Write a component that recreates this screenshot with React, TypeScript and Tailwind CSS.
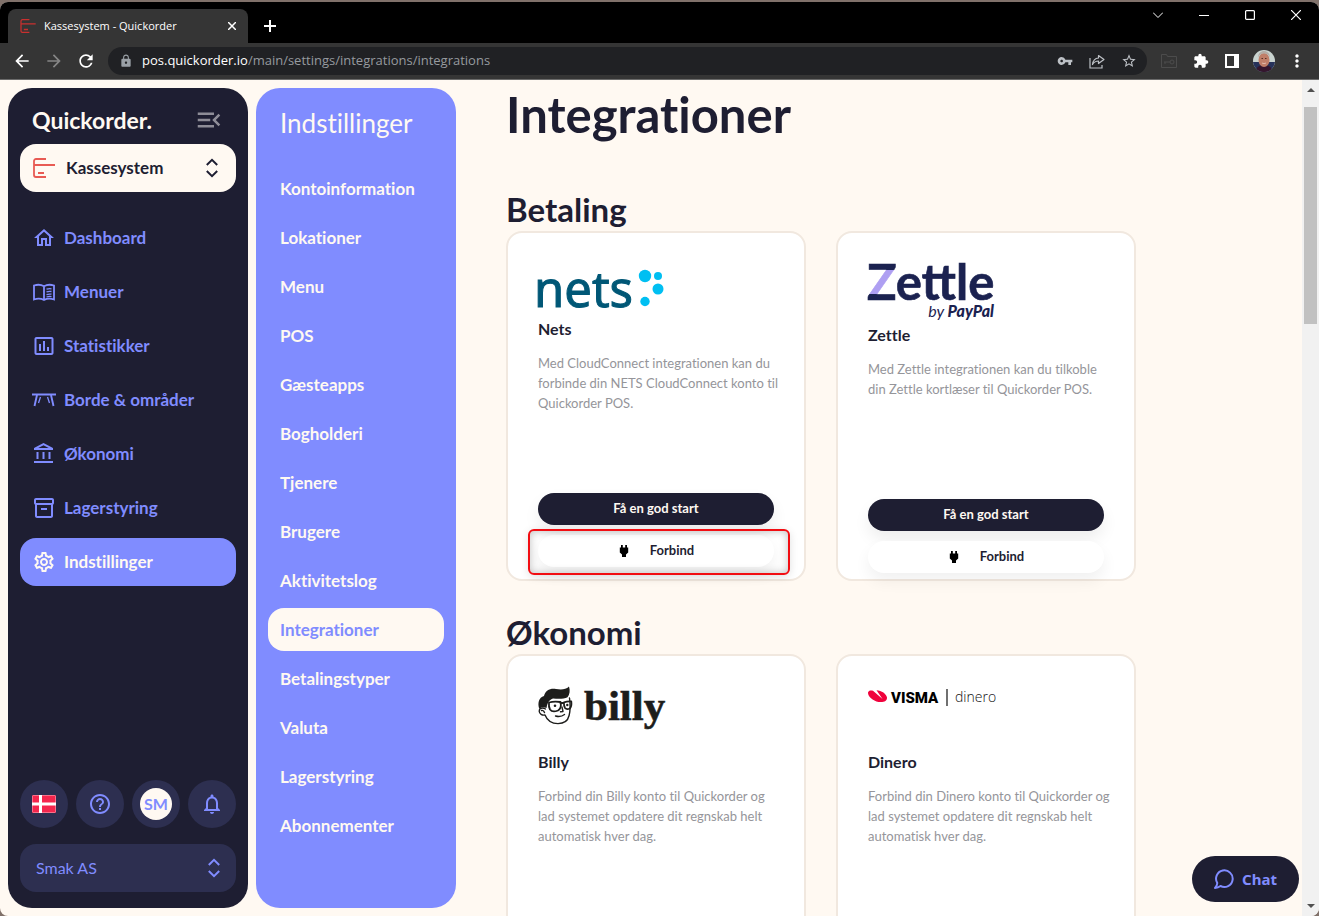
import React from 'react';
import clsx from 'clsx';
import {
  MdArrowBack,
  MdArrowForward,
  MdExtension,
  MdHelpOutline,
  MdInsertChartOutlined,
  MdLock,
  MdMenuOpen,
  MdMoreVert,
  MdNotificationsNone,
  MdOutlineAccountBalance,
  MdOutlineHome,
  MdOutlineInventory2,
  MdOutlineSettings,
  MdRefresh,
  MdStarBorder,
  MdVpnKey,
} from 'react-icons/md';

interface NavItem {
  label: string;
  icon: React.ReactNode;
}

interface Integration {
  name: string;
  description: string;
  logo: React.ReactNode;
  highlighted?: boolean;
}

interface Section {
  title: string;
  items: Integration[];
}

function BrandMark({ className }: { className?: string }) {
  return (
    <svg viewBox="0 0 22 20" className={className} fill="none" stroke="currentColor" strokeWidth="1.8" aria-hidden="true">
      <path d="M13 1H3a2 2 0 0 0-2 2v14a2 2 0 0 0 2 2h10M1 7h21M5 15h6" />
    </svg>
  );
}

function BookIcon() {
  return (
    <svg viewBox="0 0 24 24" className="size-6" fill="none" stroke="currentColor" aria-hidden="true">
      <path d="M12 6.200C9 4.500 5 4.500 2 5.500v14c3-1 7-1 10 .5 3-1.500 7-1.500 10-.5v-14c-3-1-7-1-10 .7zM12 6v14" strokeWidth="1.800" />
      <path d="M14.500 9.200q2.500-.8 5-.4M14.500 11.900q2.500-.8 5-.4M14.500 14.600q2.500-.8 5-.4M14.500 17q2.500-.8 5-.4" strokeWidth="1.300" />
    </svg>
  );
}

function TableIcon() {
  return (
    <svg viewBox="0 0 24 24" className="size-6" fill="none" stroke="currentColor" aria-hidden="true">
      <path d="M0 6.500h24" strokeWidth="2" />
      <path d="M5 7 2.500 18M19 7l2.500 11" strokeWidth="1.9" />
      <path d="M8.500 9 6.500 15M15.500 9l2 6" strokeWidth="1.300" />
    </svg>
  );
}

function UpDownIcon({ className }: { className?: string }) {
  return (
    <svg viewBox="0 0 12 20" className={className} fill="none" stroke="currentColor" strokeWidth="2" aria-hidden="true">
      <path d="M.8 7 6 1.800 11.200 7M.8 13 6 18.200l5.200-5.200" />
    </svg>
  );
}

function PlugIcon() {
  return (
    <svg viewBox="0 0 12 12" className="size-3" fill="#000" aria-hidden="true">
      <path d="M3 0h1.800v2.500h2.400V0H9v2.500h1.200v5L8 9.500V12H4V9.500L1.800 7.500v-5H3z" />
    </svg>
  );
}

function ShareIcon() {
  return (
    <svg viewBox="0 0 16 16" className="size-4" fill="none" stroke="currentColor" strokeWidth="1.2" aria-hidden="true">
      <path d="M1 5v10h12v-3" />
      <path d="M9.500 2.500 15 6.500l-5.500 4V8C7 8 5 9 3.500 11.500 4 7.500 6 5.200 9.500 5z" strokeLinejoin="round" />
    </svg>
  );
}

function ChatIcon() {
  return (
    <svg viewBox="0 0 20 20" className="size-5" fill="none" stroke="currentColor" strokeWidth="2" strokeLinejoin="round" aria-hidden="true">
      <path d="M3.300 14A8.300 8.300 0 1 1 6.500 17C5 18.200 3.200 18.900 1 18.900 2.500 17.500 3.200 16 3.300 14z" />
    </svg>
  );
}

function DanishFlag() {
  return (
    <svg viewBox="0 0 24 18" className="h-[18px] w-6" role="img" aria-label="Dansk">
      <rect width="24" height="18" rx="1" fill="#f4264d" />
      <path d="M8.500 0v18M0 9h24" stroke="#fff" strokeWidth="3" />
      <rect x=".5" y=".5" width="23" height="17" rx="1" fill="none" stroke="#fff" strokeOpacity=".35" />
    </svg>
  );
}

function NetsLogo() {
  return (
    <svg viewBox="0 0 126 50" className="h-[50px] w-[126px] overflow-visible">
      <text x="-4" y="44" fontFamily="'Noto Sans', sans-serif" fontSize="49" fill="#005776" stroke="#005776" strokeWidth="1">nets</text>
      <g fill="#00bff2">
        <circle cx="107" cy="13" r="6.200" />
        <circle cx="120" cy="13" r="4" />
        <circle cx="120" cy="26" r="5.500" />
        <circle cx="107" cy="38.500" r="4.700" />
      </g>
    </svg>
  );
}

function ZettleLogo() {
  return (
    <svg viewBox="0 0 126 56" className="h-14 w-[126px] overflow-visible [font-variant-ligatures:normal]">
      <defs>
        <linearGradient id="zettle-z" gradientUnits="userSpaceOnUse" x1="0" y1="0" x2="0" y2="37">
          <stop offset=".19" stopColor="#1b2250" />
          <stop offset=".19" stopColor="#ae9ff2" />
          <stop offset=".84" stopColor="#ae9ff2" />
          <stop offset=".84" stopColor="#1b2250" />
        </linearGradient>
      </defs>
      <text x="-1" y="37" fontFamily="Lato, sans-serif" fontWeight="700" fontSize="49" fill="#1b2250" stroke="#1b2250" strokeWidth=".6">
        <tspan fill="url(#zettle-z)" stroke="url(#zettle-z)">Z</tspan>ettle
      </text>
      <text x="126" y="54" textAnchor="end" fontFamily="Lato, sans-serif" fontStyle="italic" fontSize="16" fill="#1b2250">
        by <tspan fontWeight="900">PayPal</tspan>
      </text>
    </svg>
  );
}

function BillyLogo() {
  return (
    <svg viewBox="0 0 126 60" className="h-[60px] w-[126px] overflow-visible">
      <g fill="none" stroke="#1d1d1b" strokeWidth="1.400" strokeLinecap="round" strokeLinejoin="round">
        <path d="M31.500 12c.8 6 1 12-.4 17.500C29.800 35 25.500 37.600 20 37.600c-6.500 0-11-3.600-13-8.600-3 .5-5.500-1-5.800-3.800C1 22.500 4 21 7.500 23" fill="#fff" />
        <path d="M3.500 24.500c1.500-.4 2.500.5 3 2" />
        <path d="M11 16.500c3.500-1 7.500-1 11.500-.5.800 3.500 0 7-2.500 8.500-3 1.200-6.500 1-8-1-1-2-1.300-4.500-1-7z" strokeWidth="1.800" />
        <path d="M26 16.300c2.500-.8 5-1 7.300-.8.300 2.500 0 5.500-1.500 7-2 .9-3.800.7-4.800-.5-.9-1.500-1.200-3.500-1-5.700zM22.500 17l3.500-.2" strokeWidth="1.800" />
        <path d="M24 21l1 4.500-2.500.3M17.500 30c3.500 1 6.500.5 9-1.500" />
      </g>
      <path d="M1.300 23C-.6 17 .8 11.500 6 10 7.500 4.500 12 2 18 3c5 .8 9.500.8 13-2.500 1.300 4 .8 8-1.500 10.700-3.500 1.800-8.500 2-14.500 1.300-3.500 1.300-5.500 3.500-6.500 9.500-3-1.500-5.500-1-7.200 1z" fill="#1d1d1b" />
      <circle cx="17" cy="19.800" r="1.300" fill="#1d1d1b" />
      <circle cx="29.300" cy="19" r="1.200" fill="#1d1d1b" />
      <text x="46" y="34" fontFamily="'Liberation Serif', serif" fontWeight="700" fontSize="43" fill="#1d1d1b" stroke="#1d1d1b" strokeWidth=".6">billy</text>
    </svg>
  );
}

function DineroLogo() {
  return (
    <svg viewBox="0 0 126 60" className="h-[60px] w-[126px] overflow-visible">
      <path d="M0 6.500C.5 4.300 3 4 5 4.800L14.500 13 8.500 4.300C13.500 4.500 18.500 8 19 11.500c.3 3.500-3.500 5.200-8.500 4.400C5 15-.3 10.500 0 6.500z" fill="#f0023c" />
      <text x="23" y="17" fontFamily="Roboto, sans-serif" fontWeight="900" fontSize="15" fill="#000">VISMA</text>
      <path d="M79 3v17" stroke="#111" strokeWidth="1.200" />
      <text x="87" y="16" fontFamily="'Open Sans', sans-serif" fontWeight="300" fontSize="14" fill="#111">dinero</text>
    </svg>
  );
}

const navItems: NavItem[] = [
  { label: 'Dashboard', icon: <MdOutlineHome className="size-6" /> },
  { label: 'Menuer', icon: <BookIcon /> },
  { label: 'Statistikker', icon: <MdInsertChartOutlined className="size-6" /> },
  { label: 'Borde & områder', icon: <TableIcon /> },
  { label: 'Økonomi', icon: <MdOutlineAccountBalance className="size-6" /> },
  { label: 'Lagerstyring', icon: <MdOutlineInventory2 className="size-6" /> },
  { label: 'Indstillinger', icon: <MdOutlineSettings className="size-6" /> },
];

const settingsItems = [
  'Kontoinformation',
  'Lokationer',
  'Menu',
  'POS',
  'Gæsteapps',
  'Bogholderi',
  'Tjenere',
  'Brugere',
  'Aktivitetslog',
  'Integrationer',
  'Betalingstyper',
  'Valuta',
  'Lagerstyring',
  'Abonnementer',
];

// Line breaks in the descriptions are kept as written
const sections: Section[] = [
  {
    title: 'Betaling',
    items: [
      {
        name: 'Nets',
        description: 'Med CloudConnect integrationen kan du\nforbinde din NETS CloudConnect konto til\nQuickorder POS.',
        logo: <NetsLogo />,
        highlighted: true,
      },
      {
        name: 'Zettle',
        description: 'Med Zettle integrationen kan du tilkoble\ndin Zettle kortlæser til Quickorder POS.',
        logo: <ZettleLogo />,
      },
    ],
  },
  {
    title: 'Økonomi',
    items: [
      {
        name: 'Billy',
        description: 'Forbind din Billy konto til Quickorder og\nlad systemet opdatere dit regnskab helt\nautomatisk hver dag.',
        logo: <BillyLogo />,
      },
      {
        name: 'Dinero',
        description: 'Forbind din Dinero konto til Quickorder og\nlad systemet opdatere dit regnskab helt\nautomatisk hver dag.',
        logo: <DineroLogo />,
      },
    ],
  },
];

function BrowserBar() {
  return (
    <header className="shrink-0 bg-black font-['Open_Sans',sans-serif] text-white">
      <div className="flex h-[41px] items-end justify-between pl-2">
        <div className="flex h-[34px] items-center">
          <div className="flex h-full w-60 items-center rounded-t-lg bg-[#353535] pr-2.5 pl-3 text-[11px]">
            <BrandMark className="h-3.5 w-4 text-[#c9302f]" />
            <span className="ml-2 flex-1 whitespace-nowrap">Kassesystem - Quickorder</span>
            <button aria-label="Luk fane" className="p-0.5">
              <svg viewBox="0 0 8 8" className="size-2" stroke="#fff" strokeWidth="1.500"><path d="M0 0l8 8M8 0L0 8" /></svg>
            </button>
          </div>
          <button aria-label="Ny fane" className="ml-4">
            <svg viewBox="0 0 12 12" className="size-3" stroke="#fff" strokeWidth="2"><path d="M6 0v12M0 6h12" /></svg>
          </button>
        </div>
        <div className="flex h-full items-start gap-9 pt-2 pr-[18px]">
          <button aria-label="Søg i faner">
            <svg viewBox="0 0 10 10" className="size-2.5" fill="none" stroke="#fff"><path d="M0 2.500l5 5 5-5" /></svg>
          </button>
          <button aria-label="Minimer">
            <svg viewBox="0 0 10 10" className="size-2.5" stroke="#fff"><path d="M0 5.500h10" /></svg>
          </button>
          <button aria-label="Maksimer">
            <svg viewBox="0 0 10 10" className="size-2.5" fill="none" stroke="#fff" strokeWidth="1.200"><rect x=".6" y=".6" width="8.800" height="8.800" rx="1" /></svg>
          </button>
          <button aria-label="Luk">
            <svg viewBox="0 0 10 10" className="size-2.5" stroke="#fff" strokeWidth="1.200"><path d="M0 0l10 10M10 0L0 10" /></svg>
          </button>
        </div>
      </div>
      <div className="flex h-[37px] items-center border-b border-[#6b6b6b] bg-[#353535] pr-3.5">
        <div className="flex items-center gap-3 pl-3">
          <button aria-label="Tilbage"><MdArrowBack className="size-5" /></button>
          <button aria-label="Frem" className="text-[#858585]"><MdArrowForward className="size-5" /></button>
          <button aria-label="Genindlæs"><MdRefresh className="size-5" /></button>
        </div>
        <div className="ml-3 flex h-7 flex-1 items-center rounded-full bg-[#202124] pr-2.5 pl-[11px] text-[#bdc1c6]">
          <MdLock className="size-3.5 text-[#9aa0a6]" />
          <div className="ml-[9px] flex-1 text-[13px] text-[#969a9f]">
            <span className="text-white">pos.quickorder.io</span>/main/settings/integrations/integrations
          </div>
          <div className="flex items-center gap-4">
            <MdVpnKey className="size-4" />
            <ShareIcon />
            <MdStarBorder className="size-4" />
          </div>
        </div>
        <div className="ml-3.5 flex items-center gap-4">
          <svg viewBox="0 0 16 14" className="h-3.5 w-4" fill="none" stroke="#4c4c4c" aria-hidden="true">
            <path d="M.5.500h5l1 2h9v11H.5z" />
            <path d="M3 8h6M4 8v2" />
            <circle cx="11" cy="8" r="2" />
          </svg>
          <MdExtension className="size-4" />
          <svg viewBox="0 0 14 14" className="size-3.5" aria-hidden="true">
            <path fillRule="evenodd" fill="#fff" d="M0 0h14v14H0zM2 2v10h7V2z" />
          </svg>
          <svg viewBox="0 0 22 22" className="-mx-0.5 size-[22px] rounded-full" aria-hidden="true">
            <rect width="22" height="22" fill="#c9d3cf" />
            <path d="M0 12h22v10H0z" fill="#27325a" />
            <path d="M3 22c0-5 3-7 8-7s8 2 8 7z" fill="#35162d" />
            <ellipse cx="11" cy="10" rx="5.500" ry="7" fill="#c07f69" />
            <path d="M5 8c0-5 3-7 6-7s6 2 6 7c-1-3.500-3-4.500-6-4.500S6 4.500 5 8z" fill="#b3aca5" />
            <path d="M8.500 8.500h1.500M12 8.500h1.500" stroke="#5a2f26" />
            <path d="M9 13c1.300.7 2.700.7 4 0" stroke="#e9c9bd" strokeWidth=".8" fill="none" />
          </svg>
          <button aria-label="Flere valg" className="-mx-0.5"><MdMoreVert className="size-5" /></button>
        </div>
      </div>
    </header>
  );
}

function Sidebar() {
  return (
    <aside className="flex w-60 shrink-0 flex-col rounded-3xl bg-[#1e1e32] px-3 pb-4">
      <div className="flex h-14 items-center justify-between pt-2 pr-3 pl-3">
        <span className="text-[23px] leading-8 font-bold text-[#fff9f2]">Quickorder.</span>
        <button aria-label="Skjul menu" className="text-[#8e8d97]"><MdMenuOpen className="size-[30px]" /></button>
      </div>
      <div className="relative flex h-12 shrink-0 items-center rounded-2xl bg-[#fff9f2] text-[#1e1e32]">
        <BrandMark className="absolute left-[13px] h-5 w-[22px] text-[#e85b54]" />
        <select aria-label="System" className="h-full w-full appearance-none pl-[46px] text-[17px] font-bold">
          <option>Kassesystem</option>
        </select>
        <UpDownIcon className="pointer-events-none absolute right-[18px] h-5 w-3" />
      </div>

      <nav className="mt-[22px] flex flex-col gap-1.5">
        {navItems.map(item => (
          <a
            key={item.label}
            href="#"
            className={clsx(
              'flex h-12 items-center gap-2 rounded-2xl px-3 text-[17px] font-bold',
              item.label === 'Indstillinger' ? 'bg-[#808cff] text-[#fff9f2]' : 'text-[#808cff]'
            )}
          >
            {item.icon}
            {item.label}
          </a>
        ))}
      </nav>

      <div className="mt-auto flex justify-between text-[#808cff]">
        <button className="flex size-12 items-center justify-center rounded-full bg-[#2d2f50]"><DanishFlag /></button>
        <button aria-label="Hjælp" className="flex size-12 items-center justify-center rounded-full bg-[#2d2f50]">
          <MdHelpOutline className="size-6" />
        </button>
        <button className="flex size-12 items-center justify-center rounded-full bg-[#2d2f50]">
          <span className="flex size-8 items-center justify-center rounded-full bg-[#fff9f2] text-base font-bold">SM</span>
        </button>
        <button aria-label="Notifikationer" className="flex size-12 items-center justify-center rounded-full bg-[#2d2f50]">
          <MdNotificationsNone className="size-6" />
        </button>
      </div>
      <div className="relative mt-4 flex h-12 shrink-0 items-center rounded-2xl bg-[#2d2f50] text-[#808cff]">
        <select aria-label="Firma" className="h-full w-full appearance-none pl-4 text-base">
          <option>Smak AS</option>
        </select>
        <UpDownIcon className="pointer-events-none absolute right-4 h-5 w-3" />
      </div>
    </aside>
  );
}

function SettingsMenu() {
  return (
    <nav className="w-[200px] shrink-0 rounded-3xl bg-[#808cff] px-3 text-[#fff9f2]">
      <h2 className="px-3 pt-[19px] text-[26px] leading-8">Indstillinger</h2>
      <ul className="mt-7 flex flex-col gap-1.5">
        {settingsItems.map(item => (
          <li key={item}>
            <a
              href="#"
              className={clsx(
                'flex h-[43px] items-center rounded-2xl px-3 text-[17px] font-bold',
                item === 'Integrationer' && 'bg-[#fff9f2] text-[#808cff]'
              )}
            >
              {item}
            </a>
          </li>
        ))}
      </ul>
    </nav>
  );
}

function IntegrationCard({ name, description, logo, highlighted }: Integration) {
  return (
    <article className="h-[350px] w-[300px] rounded-2xl border-2 border-[#f1e8df] bg-white p-[30px]">
      {logo}
      <h3 className="mt-1 text-base leading-6 font-bold">{name}</h3>
      <p className="mt-3 h-[130px] text-[13px] leading-5 whitespace-pre text-[#95959a]">{description}</p>
      <button className="mt-2.5 flex h-8 w-full items-center justify-center rounded-2xl bg-[#1e1e32] text-[13px] font-bold text-[#fff9f2] shadow-[0_8px_16px_rgba(0,0,0,0.07)]">
        Få en god start
      </button>
      <div className="relative mt-2.5">
        <button className="flex h-8 w-full items-center justify-center gap-5 rounded-2xl bg-white text-[13px] font-bold shadow-[0_8px_16px_rgba(0,0,0,0.06)]">
          <PlugIcon />
          Forbind
        </button>
        {highlighted && (
          <span className="pointer-events-none absolute -top-1.5 -right-4 -bottom-2 -left-2.5 rounded-md border-2 border-[#f20d12] shadow-[0_2px_8px_rgba(0,0,0,0.12),inset_0_0_8px_rgba(0,0,0,0.25)]" />
        )}
      </div>
    </article>
  );
}

function ScrollTrack() {
  return (
    <div className="flex w-[17px] shrink-0 flex-col items-center justify-between bg-[#f1f1f1] py-2" aria-hidden="true">
      <svg viewBox="0 0 8 4" className="h-1 w-2"><path d="M0 4l4-4 4 4z" fill="#505050" /></svg>
      <div className="mt-[15px] h-[217px] w-[13px] bg-[#c1c1c1]" />
      <div className="flex-1" />
      <svg viewBox="0 0 8 4" className="h-1 w-2"><path d="M0 0l4 4 4-4z" fill="#505050" /></svg>
    </div>
  );
}

export default function App() {
  return (
    <div className="h-screen bg-[#80716a] pt-0.5 font-['Lato',sans-serif] text-[#1e1e32] [font-variant-ligatures:none]">
      <div className="flex h-full flex-col overflow-hidden rounded-lg bg-[#fff9f2]">
        <BrowserBar />
        <div className="flex min-h-0 flex-1">
          <div className="flex shrink-0 gap-2 p-2">
            <Sidebar />
            <SettingsMenu />
          </div>

          <main className="min-w-0 flex-1 overflow-hidden pt-1.5 pl-[42px]">
            <h1 className="mb-[47px] text-[49px] leading-[56px] font-bold">Integrationer</h1>
            {sections.map(section => (
              <section key={section.title} className="mb-[31px]">
                <h2 className="text-[33px] leading-10 font-bold">{section.title}</h2>
                <div className="mt-0.5 flex flex-wrap gap-[30px]">
                  {section.items.map(item => (
                    <IntegrationCard key={item.name} {...item} />
                  ))}
                </div>
              </section>
            ))}
          </main>
          <ScrollTrack />
        </div>
      </div>

      <button className="fixed right-5 bottom-3.5 flex h-[46px] w-[107px] items-center justify-center gap-2 rounded-full bg-[#1e1e32] font-['Noto_Sans',sans-serif] text-[15px] font-bold text-[#808cff]">
        <ChatIcon />
        Chat
      </button>
    </div>
  );
}
